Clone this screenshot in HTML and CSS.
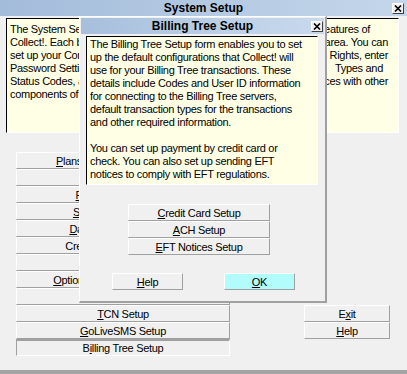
FILE: index.html
```html
<!DOCTYPE html>
<html lang="en">
<head>
    <meta charset="UTF-8">
    <title>System Setup</title>
    <link rel="stylesheet" href="styles.css">
</head>
<body>
    <div class="window">
        <div class="titlebar">
            <span class="title">System Setup</span>
            <span class="close"><svg width="8" height="7" viewBox="0 0 8 7"><path d="M1 0.5 L7 6.5 M7 0.5 L1 6.5" stroke="#000" stroke-width="1.6"/></svg></span>
        </div>

        <div class="memo">
            <div class="line"><span>The System Setup menu gives you access to the many</span><span>features of</span></div>
            <div class="line"><span>Collect!. Each button opens a form for a particular</span><span>area. You can</span></div>
            <div class="line"><span>set up your Company Details, User Levels and Access</span><span>Rights, enter</span></div>
            <div class="line"><span>Password Settings, Contact Plans, define Transaction</span><span>Types and</span></div>
            <div class="line"><span>Status Codes, and set up interfaces and</span><span>services with other</span></div>
            <div class="line"><span>components of your Collect! system.</span></div>
        </div>

        <div class="panel">
            <div class="col-left">
                <button class="btn"><u>P</u>lans and Payments Options</button>
                <button class="btn">Reports Setup</button>
                <button class="btn"><u>F</u>inancial Year Setup</button>
                <button class="btn"><u>S</u>ecurity Levels Setup</button>
                <button class="btn"><u>D</u>atabase Maintenance</button>
                <button class="btn">Credit Reporting Settings</button>
                <button class="btn">Email Setup</button>
                <button class="btn"><u>O</u>ptions and Preference Setup</button>
                <button class="btn">Letter Setup</button>
                <button class="btn"><u>T</u>CN Setup</button>
                <button class="btn"><u>G</u>oLiveSMS Setup</button>
                <button class="btn pressed">B<u>i</u>lling Tree Setup</button>
            </div>
            <div class="col-right">
                <button class="btn">E<u>x</u>it</button>
                <button class="btn"><u>H</u>elp</button>
            </div>
        </div>

        <div class="dialog">
            <div class="titlebar">
                <span class="title">Billing Tree Setup</span>
                <span class="close"><svg width="8" height="7" viewBox="0 0 8 7"><path d="M1 0.5 L7 6.5 M7 0.5 L1 6.5" stroke="#000" stroke-width="1.6"/></svg></span>
            </div>
            <div class="memo dialog-memo">
                <p>The Billing Tree Setup form enables you to set<br>
                up the default configurations that Collect! will<br>
                use for your Billing Tree transactions. These<br>
                details include Codes and User ID information<br>
                for connecting to the Billing Tree servers,<br>
                default transaction types for the transactions<br>
                and other required information.</p>
                <p>You can set up payment by credit card or<br>
                check. You can also set up sending EFT<br>
                notices to comply with EFT regulations.</p>
            </div>
            <div class="setup-buttons">
                <button class="btn"><u>C</u>redit Card Setup</button>
                <button class="btn"><u>A</u>CH Setup</button>
                <button class="btn"><u>E</u>FT Notices Setup</button>
            </div>
            <div class="dialog-actions">
                <button class="btn small"><u>H</u>elp</button>
                <button class="btn small ok"><u>O</u>K</button>
            </div>
        </div>
    </div>
</body>
</html>
```

FILE: styles.css
```css
body {
    margin: 0;
    background: #f0f0f0;
    font-family: "Liberation Sans", Arial, sans-serif;
    font-size: 11px;
    letter-spacing: -0.3px;
    color: #000;
}
.window {
    position: relative;
    width: 407px;
    height: 374px;
    box-sizing: border-box;
    border-bottom: 4px solid #a3a3a3;
    display: flex;
    flex-direction: column;
}
.titlebar {
    height: 16px;
    display: grid;
    grid-template-columns: 1fr auto 1fr;
    align-items: center;
    background: linear-gradient(to right, #a3bcda, #b7cce4 60%, #c4d6ea);
}
.title {
    grid-column: 2;
    font-size: 12px;
    font-weight: bold;
    letter-spacing: 0;
}
.close {
    grid-column: 3;
    justify-self: end;
    margin-right: 3px;
    width: 12px;
    height: 11px;
    box-sizing: border-box;
    display: flex;
    align-items: center;
    justify-content: center;
    background: #f0f0f0;
    border: 1px solid;
    border-color: #fff #404040 #404040 #fff;
}
.memo {
    margin: 2px 8px 0 6px;
    height: 115px;
    box-sizing: border-box;
    padding: 4px 2px 0 3px;
    background: #ffffe6;
    border-left: 1px solid #000;
    border-top: 1px solid #000;
    border-right: 1px solid #fff;
    border-bottom: 1px solid #fff;
    line-height: 13px;
}
.line {
    display: flex;
    white-space: nowrap;
    padding-right: 8px;
}
.line span + span {
    margin-left: auto;
}
.line:nth-child(1) {
    padding-right: 26px;
}
.line:nth-child(4) {
    padding-right: 13px;
}
.panel {
    display: flex;
    align-items: flex-end;
    margin-top: 19px;
    padding-left: 16px;
}
.col-left {
    width: 214px;
    display: flex;
    flex-direction: column;
}
.col-right {
    width: 86px;
    margin-left: 74px;
    margin-bottom: 17px;
    display: flex;
    flex-direction: column;
}
.btn {
    height: 17px;
    box-sizing: border-box;
    padding: 0;
    margin: 0;
    background: #f0f0f0;
    border: 1px solid;
    border-color: #fff #a0a0a0 #a0a0a0 #fff;
    font: inherit;
    letter-spacing: inherit;
    color: #000;
    text-align: center;
    white-space: nowrap;
    overflow: hidden;
}
.btn.pressed {
    border-width: 2px 1px 1px 1px;
    border-color: #a0a0a0 #fff #fff #a0a0a0;
}
.dialog {
    position: absolute;
    left: 79px;
    top: 16px;
    width: 248px;
    height: 287px;
    box-sizing: border-box;
    padding: 1px;
    background: #f0f0f0;
    border-left: 1px solid #fff;
    border-top: 1px solid #fff;
    border-right: 2px solid #a0a0a0;
    border-bottom: 2px solid #a0a0a0;
    display: flex;
    flex-direction: column;
}
.dialog .titlebar {
    height: 16px;
    background: linear-gradient(to right, #a6bfdc, #bcd0e7 60%, #c8d9ec);
}
.dialog .close {
    margin-right: 1px;
}
.dialog-memo {
    margin: 2px 0 0 5px;
    width: 232px;
    height: 149px;
    padding: 1px 2px 0 3px;
}
.dialog-memo p {
    margin: 0 0 13px;
    white-space: nowrap;
}
.setup-buttons {
    margin: 19px 0 0 47px;
    width: 142px;
    display: flex;
    flex-direction: column;
}
.dialog-actions {
    display: flex;
    gap: 41px;
    margin: 18px 0 0 31px;
}
.btn.small {
    width: 71px;
}
.btn.ok {
    background: #b2fcfc;
}
```
